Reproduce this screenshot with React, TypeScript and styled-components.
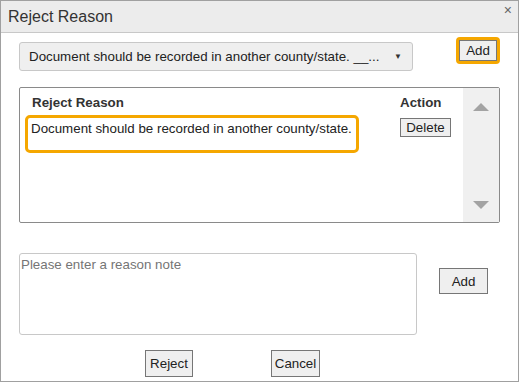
import styled, { createGlobalStyle } from 'styled-components'

const GlobalStyle = createGlobalStyle`
  html, body {
    margin: 0;
    padding: 0;
    background: #fff;
  }
  body {
    font-family: "Liberation Sans", Arial, sans-serif;
    font-size: 13.33px;
    color: #222;
  }
`

const Dialog = styled.div`
  box-sizing: border-box;
  width: 519px;
  height: 382px;
  border: 1px solid #a0a0a0;
  display: flex;
  flex-direction: column;
  background: #fff;
`

const TitleBar = styled.div`
  height: 31px;
  flex: none;
  display: flex;
  align-items: center;
  justify-content: space-between;
  background: #ececec;
  border-bottom: 1px solid #c8c8c8;
  padding: 0 6px 0 7px;

  h1 {
    margin: 0;
    font-size: 16px;
    font-weight: 400;
    color: #333;
  }
`

const Close = styled.span`
  align-self: flex-start;
  margin-top: 2px;
  font-size: 14px;
  color: #666;
  line-height: 14px;
`

const Body = styled.div`
  display: flex;
  flex-direction: column;
  padding: 0 18px;
`

const TopRow = styled.div`
  display: flex;
  align-items: flex-start;
  height: 54px;
`

const Select = styled.div`
  box-sizing: border-box;
  margin-top: 9px;
  width: 398px;
  height: 29px;
  border: 1px solid #c8c8c8;
  border-radius: 3px;
  background: #efefef;
  display: flex;
  align-items: center;
  justify-content: space-between;
  padding: 0 10px 0 9px;
  color: #222;

  span.arrow {
    font-size: 8px;
    color: #333;
  }
`

const Highlight = styled.div`
  box-sizing: border-box;
  border: 3px solid #f5a700;
  border-radius: 4px;
`

const Button = styled.button<{ $w?: number; $h?: number }>`
  box-sizing: border-box;
  width: ${p => p.$w ?? 48}px;
  height: ${p => p.$h ?? 27}px;
  padding: 0;
  font-family: "Liberation Sans", Arial, sans-serif;
  font-size: 13.33px;
  color: #222;
  background: #efefef;
  border: 1px solid #767676;
  border-radius: 0;
`

const AddTop = styled.div`
  margin: 4px 0 0 43px;
`

const Table = styled.div`
  box-sizing: border-box;
  width: 481px;
  height: 136px;
  border: 1px solid #8a8a8a;
  border-radius: 2px;
  display: flex;
`

const TableMain = styled.div`
  flex: 1;
  padding: 6px 0 0 5px;
`

const HeadRow = styled.div`
  display: flex;
  font-weight: 700;
  color: #333;
  height: 17px;
  align-items: center;

  span:first-child {
    padding-left: 7px;
    width: 368px;
  }
`

const DataRow = styled.div`
  display: flex;
  align-items: flex-start;
  margin-top: 4px;
`

const ReasonCell = styled.div`
  box-sizing: border-box;
  width: 334px;
  height: 38px;
  border: 3px solid #f5a700;
  border-radius: 5px;
  padding: 3px 0 0 3px;
  color: #222;
`

const ActionCell = styled.div`
  margin: 3px 0 0 41px;
`

const Scrollbar = styled.div`
  width: 36px;
  background: #f0f0f0;
  display: flex;
  flex-direction: column;
  justify-content: space-between;
  align-items: center;
  padding: 15px 0 13px;
`

const Arrow = styled.div<{ $down?: boolean }>`
  width: 0;
  height: 0;
  border-left: 8px solid transparent;
  border-right: 8px solid transparent;
  ${p => (p.$down ? 'border-top: 8px solid #a3a3a3;' : 'border-bottom: 8px solid #a3a3a3;')}
`

const NoteRow = styled.div`
  display: flex;
  align-items: flex-start;
  margin-top: 30px;
`

const Note = styled.textarea`
  box-sizing: border-box;
  width: 398px;
  height: 82px;
  border: 1px solid #c8c8c8;
  border-radius: 3px;
  padding: 3px 1px;
  resize: none;
  font-family: "Liberation Sans", Arial, sans-serif;
  font-size: 13.33px;
  color: #222;

  &::placeholder {
    color: #757575;
  }
`

const AddNote = styled.div`
  margin: 15px 0 0 22px;
`

const Actions = styled.div`
  display: flex;
  margin-top: 15px;
  padding-left: 126px;
  gap: 78px;
`

export default function App() {
  return (
    <>
      <GlobalStyle />
      <Dialog>
        <TitleBar>
          <h1>Reject Reason</h1>
          <Close>×</Close>
        </TitleBar>
        <Body>
          <TopRow>
            <Select>
              <span>Document should be recorded in another county/state. __...</span>
              <span className="arrow">▼</span>
            </Select>
            <AddTop>
              <Highlight>
                <Button $w={38} $h={21}>Add</Button>
              </Highlight>
            </AddTop>
          </TopRow>
          <Table>
            <TableMain>
              <HeadRow>
                <span>Reject Reason</span>
                <span>Action</span>
              </HeadRow>
              <DataRow>
                <ReasonCell>Document should be recorded in another county/state.</ReasonCell>
                <ActionCell>
                  <Button $w={51} $h={19}>Delete</Button>
                </ActionCell>
              </DataRow>
            </TableMain>
            <Scrollbar>
              <Arrow />
              <Arrow $down />
            </Scrollbar>
          </Table>
          <NoteRow>
            <Note placeholder="Please enter a reason note" />
            <AddNote>
              <Button $w={49} $h={26}>Add</Button>
            </AddNote>
          </NoteRow>
          <Actions>
            <Button $w={48} $h={27}>Reject</Button>
            <Button $w={49} $h={27}>Cancel</Button>
          </Actions>
        </Body>
      </Dialog>
    </>
  )
}
